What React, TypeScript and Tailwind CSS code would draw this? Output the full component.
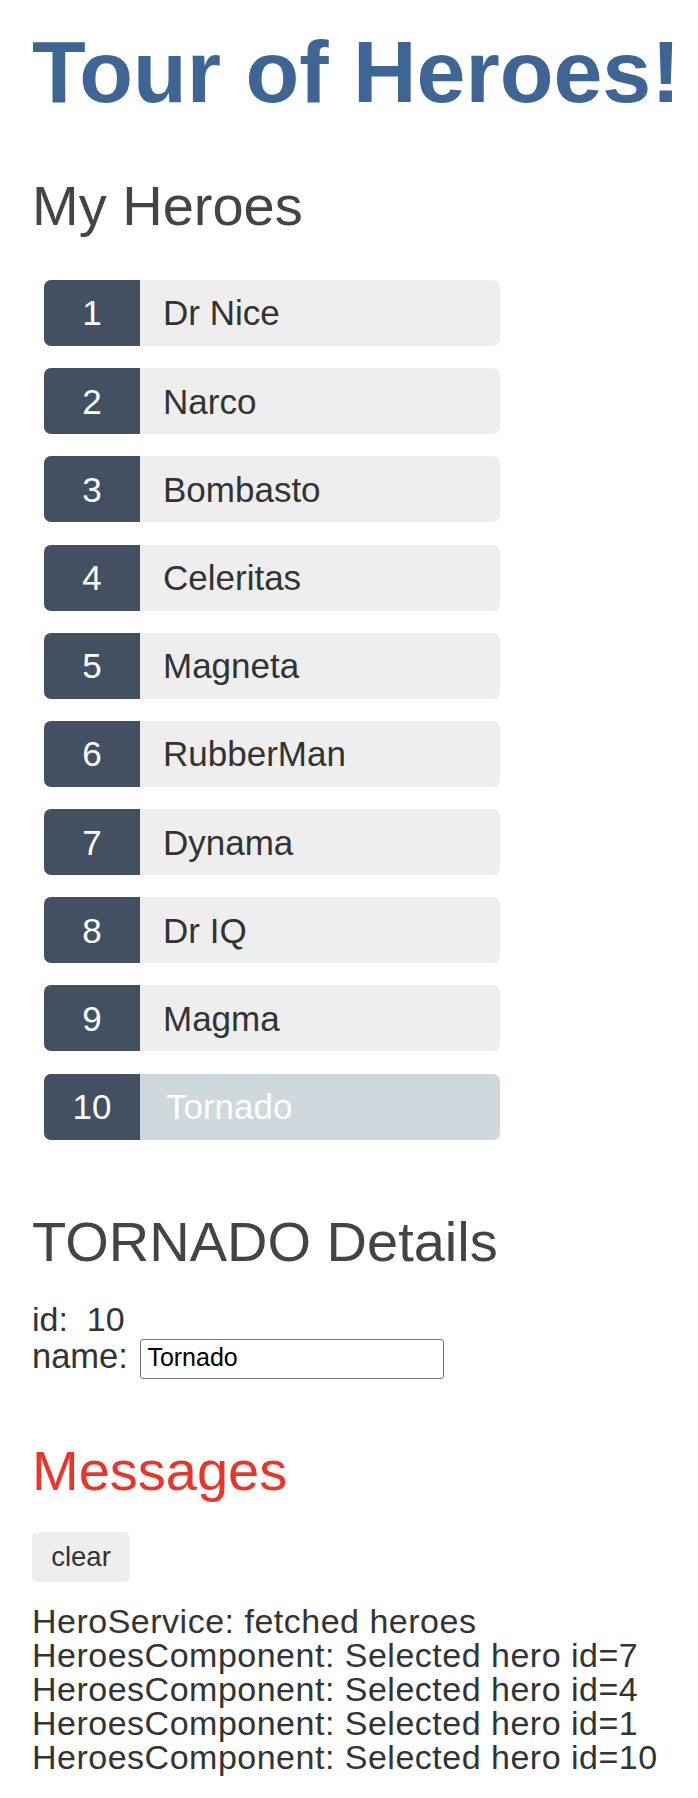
import { useState } from "react";

type Hero = { id: number; name: string };

const HEROES: Hero[] = [
  { id: 1, name: "Dr Nice" },
  { id: 2, name: "Narco" },
  { id: 3, name: "Bombasto" },
  { id: 4, name: "Celeritas" },
  { id: 5, name: "Magneta" },
  { id: 6, name: "RubberMan" },
  { id: 7, name: "Dynama" },
  { id: 8, name: "Dr IQ" },
  { id: 9, name: "Magma" },
  { id: 10, name: "Tornado" },
];

export default function App() {
  const [heroes, setHeroes] = useState<Hero[]>(HEROES);
  const [selectedId, setSelectedId] = useState(10);
  const [messages, setMessages] = useState<string[]>([
    "HeroService: fetched heroes",
    "HeroesComponent: Selected hero id=7",
    "HeroesComponent: Selected hero id=4",
    "HeroesComponent: Selected hero id=1",
    "HeroesComponent: Selected hero id=10",
  ]);

  const selected = heroes.find((h) => h.id === selectedId);

  function selectHero(hero: Hero) {
    setSelectedId(hero.id);
    setMessages((m) => [...m, `HeroesComponent: Selected hero id=${hero.id}`]);
  }

  function rename(name: string) {
    setHeroes((list) =>
      list.map((h) => (h.id === selectedId ? { ...h, name } : h))
    );
  }

  return (
    <div className="min-h-screen overflow-hidden bg-white px-[32px] pt-[27.5px] pb-[24px] font-['Liberation_Sans',Arial,sans-serif] text-[#333]">
      <h1 className="whitespace-nowrap text-[88px] font-bold leading-[88px] text-[#3f6594]">
        Tour of Heroes!
      </h1>

      <h2 className="mt-[62.8px] text-[56px] leading-[56px] text-[#444]">
        My Heroes
      </h2>

      <ul className="mt-[45.7px] ml-[12px] flex w-[456px] flex-col gap-[22.2px]">
        {heroes.map((hero) => {
          const isSelected = hero.id === selectedId;
          return (
            <li key={hero.id}>
              <button
                onClick={() => selectHero(hero)}
                className={
                  isSelected
                    ? "flex h-[66px] w-full overflow-hidden rounded-[7px] bg-[#cfd8dc] text-left text-[35px] leading-[35px]"
                    : "flex h-[66px] w-full overflow-hidden rounded-[7px] bg-[#eeeeee] text-left text-[35px] leading-[35px] hover:bg-[#dddddd]"
                }
              >
                <span className="flex w-[96px] shrink-0 items-center justify-center bg-[#435061] text-white">
                  {hero.id}
                </span>
                <span
                  className={
                    isSelected
                      ? "flex items-center pl-[26px] text-white"
                      : "flex items-center pl-[23px] text-[#333]"
                  }
                >
                  {hero.name}
                </span>
              </button>
            </li>
          );
        })}
      </ul>

      {selected && (
        <div>
          <h2 className="mt-[74.7px] text-[56px] leading-[56px] text-[#444]">
            {selected.name.toUpperCase()} Details
          </h2>
          <div className="mt-[31.6px] whitespace-pre text-[34px] leading-[35px]">
            <span>id:  </span>
            {selected.id}
          </div>
          <div className="mt-[2.2px] flex items-start">
            <label htmlFor="hero-name" className="text-[34.5px] leading-[35px]">
              name:
            </label>
            <input
              id="hero-name"
              value={selected.name}
              onChange={(e) => rename(e.target.value)}
              className="ml-[12.5px] h-[39.7px] w-[304px] rounded-[3px] border border-[#767676] bg-white px-[6px] pb-[2px] text-[25px] leading-[25px] text-black outline-none"
            />
          </div>
        </div>
      )}

      <h2 className="mt-[64.6px] text-[56px] leading-[56px] text-[#e9352a]">
        Messages
      </h2>

      <button
        onClick={() => setMessages([])}
        className="mt-[32.7px] block h-[49.4px] w-[98px] rounded-[6px] bg-[#eeeeee] text-center text-[27.5px] leading-[27.5px] text-[#333] hover:bg-[#dddddd]"
      >
        clear
      </button>

      <div className="mt-[22.2px]">
        {messages.map((msg, i) => (
          <div
            key={i}
            className="whitespace-nowrap text-[34px] leading-[34px] tracking-[0.5px]"
          >
            {msg}
          </div>
        ))}
      </div>
    </div>
  );
}
